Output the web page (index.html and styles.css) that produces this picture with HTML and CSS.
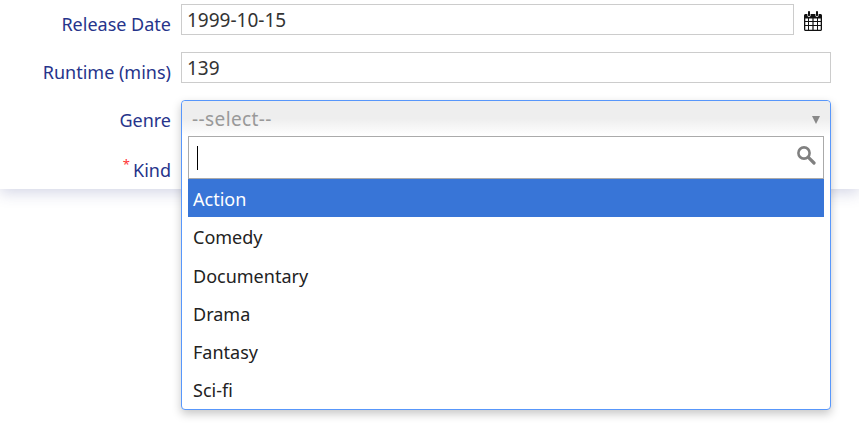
FILE: index.html
```html
<!DOCTYPE html>
<html lang="en">
<head>
    <meta charset="UTF-8">
    <title>Edit movie</title>
    <link rel="stylesheet" href="styles.css">
</head>
<body>
    <form class="card">
        <div class="row">
            <label class="label">Release Date</label>
            <div class="field">
                <input class="input" type="text" value="1999-10-15">
            </div>
            <svg class="calendar" viewBox="0 0 18 20" width="18" height="20">
                <path fill="#111" fill-rule="evenodd" d="M1.5 3H3.4V4.2C3.4 5.3 4.2 6 5 6S6.6 5.3 6.6 4.2V3H11.4V4.2C11.4 5.3 12.2 6 13 6S14.6 5.3 14.6 4.2V3H16.5C17.3 3 18 3.7 18 4.5V18.5C18 19.3 17.3 20 16.5 20H1.5C.7 20 0 19.3 0 18.5V4.5C0 3.7.7 3 1.5 3ZM1.3 7.5V10H4V7.5ZM5 7.5V10H8.4V7.5ZM9.6 7.5V10H13V7.5ZM14 7.5V10H16.7V7.5ZM1.3 11V14H4V11ZM5 11V14H8.4V11ZM9.6 11V14H13V11ZM14 11V14H16.7V11ZM1.3 15V18.7H4V15ZM5 15V18.7H8.4V15ZM9.6 15V18.7H13V15ZM14 15V18.7H16.7V15Z"/>
                <path fill="#111" d="M4 1.2C4 .5 4.4 0 5 0S6 .5 6 1.2V4.2C6 4.9 5.6 5.4 5 5.4S4 4.9 4 4.2ZM12 1.2C12 .5 12.4 0 13 0S14 .5 14 1.2V4.2C14 4.9 13.6 5.4 13 5.4S12 4.9 12 4.2Z"/>
            </svg>
        </div>
        <div class="row">
            <label class="label">Runtime (mins)</label>
            <div class="field">
                <input class="input" type="text" value="139">
            </div>
        </div>
        <div class="row">
            <label class="label">Genre</label>
            <div class="field select">
                <div class="dropdown">
                    <div class="select-head">
                        <span class="placeholder">--select--</span>
                        <span class="arrow"></span>
                    </div>
                    <div class="search">
                        <span class="caret"></span>
                        <svg class="search-icon" viewBox="0 0 20 20" width="20" height="20">
                            <circle cx="8" cy="8" r="5.6" fill="none" stroke="#808080" stroke-width="2.6"/>
                            <path d="M12.4 12.4L18 18" stroke="#808080" stroke-width="3.2" stroke-linecap="round"/>
                        </svg>
                    </div>
                    <ul class="options">
                        <li class="option active">Action</li>
                        <li class="option">Comedy</li>
                        <li class="option">Documentary</li>
                        <li class="option">Drama</li>
                        <li class="option">Fantasy</li>
                        <li class="option">Sci-fi</li>
                    </ul>
                </div>
            </div>
        </div>
        <div class="row">
            <label class="label label-kind"><span class="required">*</span>Kind</label>
            <div class="field"></div>
        </div>
    </form>
</body>
</html>
```

FILE: styles.css
```css
* {
    box-sizing: border-box;
}
html, body {
    height: 100%;
}
body {
    margin: 0;
    background-color: #fff;
    font-family: "Noto Sans", "Open Sans", sans-serif;
    font-size: 18px;
}
.card {
    height: 189px;
    padding: 4px 28px 0 0;
    background-color: #fff;
    box-shadow: 0 4px 14px rgba(60, 70, 140, 0.22);
}
.row {
    display: flex;
    align-items: flex-start;
    height: 31px;
    margin-bottom: 17px;
}
.label {
    width: 171px;
    flex-shrink: 0;
    margin-right: 10px;
    padding-top: 5px;
    line-height: 31px;
    height: 31px;
    text-align: right;
    color: #26348b;
    white-space: nowrap;
}
.label-kind {
    padding-top: 7px;
}
.required {
    position: relative;
    top: -8px;
    margin-right: 3px;
    font-size: 13px;
    color: #f33;
}
.field {
    flex: 1;
    min-width: 0;
}
.input {
    display: block;
    width: 100%;
    height: 31px;
    padding: 0 5px;
    border: 1px solid #ccc;
    font: inherit;
    font-size: 19px;
    color: #333;
    outline: none;
}
.calendar {
    flex-shrink: 0;
    margin: 7px 9px 0 10px;
    width: 18px;
    height: 20px;
}
.select {
    position: relative;
    height: 31px;
}
.dropdown {
    position: absolute;
    z-index: 1;
    top: 0;
    left: 0;
    right: 0;
    height: 310px;
    border: 1px solid #5897fb;
    border-radius: 4px;
    background-color: #fff;
    box-shadow: 0 4px 10px rgba(0, 0, 0, 0.22);
}
.select-head {
    display: flex;
    align-items: center;
    justify-content: space-between;
    height: 35px;
    padding: 0 10px;
    border-radius: 4px 4px 0 0;
    background: linear-gradient(to bottom, #eee 50%, #fff 100%);
}
.placeholder {
    font-size: 19px;
    letter-spacing: 0.4px;
    color: #999;
}
.arrow {
    width: 0;
    height: 0;
    margin-top: 2px;
    border-left: 4.5px solid transparent;
    border-right: 4.5px solid transparent;
    border-top: 8px solid #888;
}
.search {
    display: flex;
    align-items: center;
    justify-content: space-between;
    height: 43px;
    margin: 0 6px;
    padding: 0 7px 0 8px;
    border: 1px solid #aaa;
    border-radius: 0;
    background-color: #fff;
}
.caret {
    width: 1px;
    height: 24px;
    background-color: #000;
}
.search-icon {
    margin-top: -6px;
}
.options {
    list-style: none;
    margin: 0 6px;
    padding: 0;
}
.option {
    height: 38.3px;
    padding: 1px 0 0 5px;
    line-height: 38px;
    color: #222;
}
.option.active {
    background-color: #3875d7;
    color: #fff;
}
```
